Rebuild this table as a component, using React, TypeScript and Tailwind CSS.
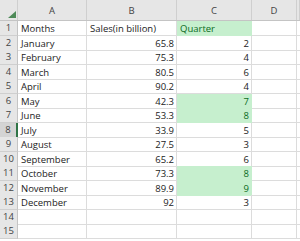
const rows: [string, string, string, boolean][] = [
  ["Months", "Sales(in billion)", "Quarter", true],
  ["January", "65.8", "2", false],
  ["February", "75.3", "4", false],
  ["March", "80.5", "6", false],
  ["April", "90.2", "4", false],
  ["May", "42.3", "7", true],
  ["June", "53.3", "8", true],
  ["July", "33.9", "5", false],
  ["August", "27.5", "3", false],
  ["September", "65.2", "6", false],
  ["October", "73.3", "8", true],
  ["November", "89.9", "9", true],
  ["December", "92", "3", false],
  ["", "", "", false],
  ["", "", "", false],
];

const cols = "grid grid-cols-[18px_69px_90px_75px_45px_3px]";

export default function App() {
  return (
    <div
      className="h-[241px] w-[300px] overflow-hidden bg-white text-[9.5px] text-[#222]"
      style={{ fontFamily: '"Open Sans", "Liberation Sans", sans-serif' }}
    >
      {/* column headers */}
      <div className={`${cols} h-[21px] border-b border-[#c4c4c4] bg-[#e6e6e6] text-[#444]`}>
        <div className="relative border-r border-[#cfcfcf]">
          <svg className="absolute left-[8px] top-[11px]" width="8" height="7" viewBox="0 0 8 7">
            <polygon points="8,0 8,7 0,7" fill="#4e8a58" />
          </svg>
        </div>
        {["A", "B", "C", "D", ""].map((c, i) => (
          <div key={i} className="flex items-end justify-center border-r border-[#cfcfcf] pb-[2px]">
            {c}
          </div>
        ))}
      </div>

      {rows.map(([a, b, c, green], i) => {
        const sel = i === 7;
        const isHead = i === 0;
        return (
          <div key={i} className={`${cols} h-[14.5px]`}>
            <div
              className={`flex items-center justify-center border-b border-[#cfcfcf] text-[#444] ${
                sel ? "border-r-2 border-r-[#2f7446] bg-[#d4d4d4]" : "border-r border-r-[#c4c4c4] bg-[#e6e6e6]"
              }`}
            >
              {i + 1}
            </div>
            <div className="flex items-end overflow-visible whitespace-nowrap border-b border-r border-[#dcdcdc] pl-[3px] leading-[13px]">
              {a}
            </div>
            <div
              className={`flex items-end whitespace-nowrap border-b border-r border-[#dcdcdc] pr-[2px] leading-[13px] ${
                isHead ? "justify-start pl-[3px]" : "justify-end"
              }`}
            >
              {b}
            </div>
            <div
              className={`flex items-end whitespace-nowrap border-b border-r leading-[13px] ${
                green ? "border-[#c6efce] bg-[#c6efce] text-[#0a6b22]" : "border-[#dcdcdc]"
              } ${isHead ? "justify-start pl-[3px]" : "justify-end pr-[2px]"}`}
            >
              {c}
            </div>
            <div className="border-b border-r border-[#dcdcdc]" />
            <div className="border-b border-[#dcdcdc]" />
          </div>
        );
      })}
    </div>
  );
}
